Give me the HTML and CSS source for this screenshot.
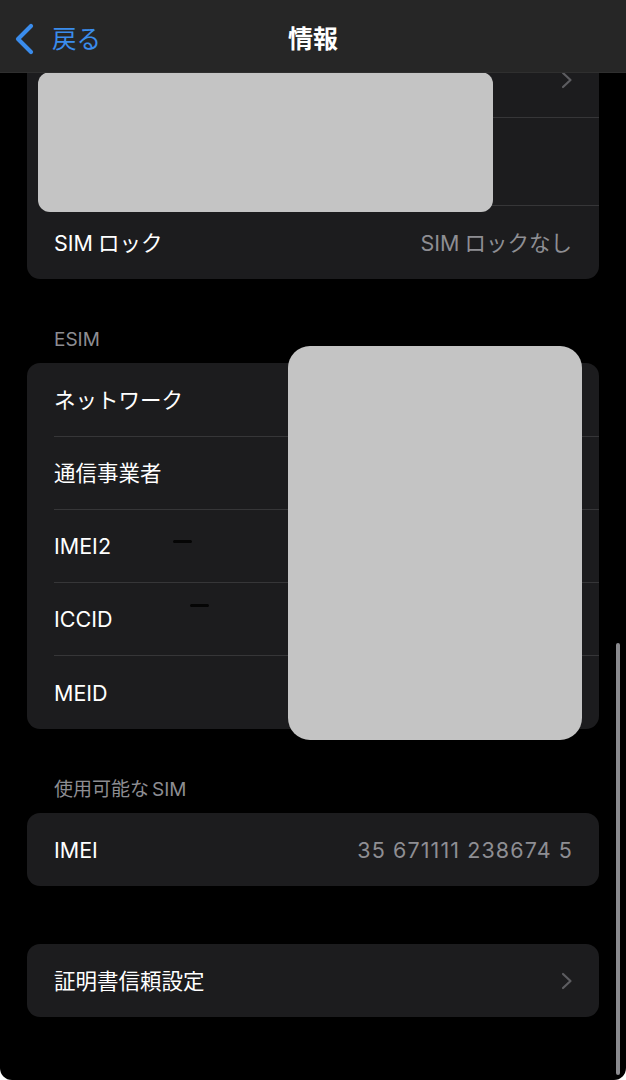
FILE: index.html
```html
<!DOCTYPE html>
<html lang="ja">
<head>
<meta charset="utf-8">
<title>情報</title>
<link rel="stylesheet" href="styles.css">
</head>
<body>
<div class="screen">
  <header class="nav">
    <div class="back">
      <svg class="back-chev" width="22" height="32" viewBox="0 0 22 32"><path d="M18 3 L5 16 L18 29" fill="none" stroke="#3a8cec" stroke-width="4.2" stroke-linecap="round" stroke-linejoin="round"/></svg>
      <span class="back-text">戻る</span>
    </div>
    <div class="nav-title">情報</div>
  </header>

  <main class="content">
    <section class="card">
      <div class="row row-first">
        <span class="label"></span>
        <svg class="chev" width="12" height="18" viewBox="0 0 12 18"><path d="M2 2 L9.5 9 L2 16" fill="none" stroke="#5c5c60" stroke-width="2.2" stroke-linecap="round" stroke-linejoin="round"/></svg>
      </div>
      <div class="row row-tall"><span class="label"></span></div>
      <div class="row">
        <span class="label">SIM<span class="jp-gap">ロック</span></span>
        <span class="value">SIM<span class="jp-gap">ロックなし</span></span>
      </div>
    </section>

    <div class="section-header">ESIM</div>
    <section class="card">
      <div class="row"><span class="label">ネットワーク</span></div>
      <div class="row"><span class="label">通信事業者</span></div>
      <div class="row"><span class="label">IMEI2</span></div>
      <div class="row"><span class="label">ICCID</span></div>
      <div class="row"><span class="label">MEID</span></div>
    </section>

    <div class="section-header">使用可能な<span class="jp-gap-sm">SIM</span></div>
    <section class="card">
      <div class="row">
        <span class="label">IMEI</span>
        <span class="value num">35 671111 238674 5</span>
      </div>
    </section>

    <section class="card card-gap">
      <div class="row">
        <span class="label">証明書信頼設定</span>
        <svg class="chev" width="12" height="18" viewBox="0 0 12 18"><path d="M2 2 L9.5 9 L2 16" fill="none" stroke="#5c5c60" stroke-width="2.2" stroke-linecap="round" stroke-linejoin="round"/></svg>
      </div>
    </section>
  </main>

  <div class="redact redact-1"></div>
  <div class="redact redact-2"></div>
  <div class="dash dash-1"></div>
  <div class="dash dash-2"></div>
  <div class="scrollbar"></div>
</div>
</body>
</html>
```

FILE: styles.css
```css
* { box-sizing: border-box; }

html, body {
  margin: 0;
  padding: 0;
  background: #ffffff;
}

body {
  font-family: Inter, "Noto Sans CJK JP", "Noto Sans", sans-serif;
  color: #ffffff;
}

.screen {
  position: relative;
  width: 626px;
  height: 1080px;
  background: #000000;
  overflow: hidden;
  border-radius: 0 0 12px 12px;
}

.nav {
  position: absolute;
  top: 0;
  left: 0;
  right: 0;
  height: 73px;
  background: #262626;
  border-bottom: 1px solid #2f2f2f;
  z-index: 5;
  display: flex;
  align-items: center;
  justify-content: center;
}

.back {
  position: absolute;
  left: 13px;
  top: 23px;
  display: flex;
  align-items: center;
  gap: 17px;
}

.back-text {
  font-family: "Noto Sans CJK JP", sans-serif;
  font-size: 24.5px;
  line-height: 32px;
  color: #3a8cec;
  margin-top: -2px;
}

.nav-title {
  font-family: "Noto Sans CJK JP", sans-serif;
  font-size: 25px;
  font-weight: 700;
  line-height: 32px;
  color: #ffffff;
  margin-top: 1px;
}

.content {
  padding-top: 43px;
}

.card {
  margin: 0 27px;
  background: #1c1c1e;
  border-radius: 13px;
  overflow: hidden;
}

.card-gap {
  margin-top: 58px;
}

.row {
  margin-left: 27px;
  padding-right: 27px;
  height: 73px;
  display: flex;
  align-items: center;
  justify-content: space-between;
  border-top: 1px solid #363638;
}

.row:first-child {
  border-top: none;
}

.row-first { height: 74px; align-items: flex-start; padding-top: 28px; }
.row-tall { height: 88px; }

.card .row:last-child:not(:first-child) { height: 74px; }

.label {
  font-size: 21.5px;
  line-height: 28px;
  color: #ffffff;
  font-family: Inter, "Noto Sans CJK JP", sans-serif;
}

.value {
  font-size: 21.5px;
  line-height: 28px;
  color: #8e8e93;
  font-family: Inter, "Noto Sans CJK JP", sans-serif;
}

.num {
  letter-spacing: 1.1px;
  margin-right: -1px;
}

.jp-gap { margin-left: 5px; }
.jp-gap-sm { margin-left: 3px; }

.chev {
  display: block;
  margin-right: -1px;
}

.section-header {
  padding: 49px 27px 11px 54px;
  font-size: 19px;
  line-height: 24px;
  color: #8d8d92;
  font-family: Inter, "Noto Sans CJK JP", sans-serif;
}

.redact {
  position: absolute;
  background: #c4c4c4;
  z-index: 3;
}

.redact-1 {
  left: 38px;
  top: 72px;
  width: 455px;
  height: 140px;
  border-radius: 12px;
}

.redact-2 {
  left: 288px;
  top: 346px;
  width: 294px;
  height: 394px;
  border-radius: 22px;
}

.dash {
  position: absolute;
  height: 3px;
  width: 19px;
  background: #050505;
  border-radius: 2px;
  z-index: 2;
}

.dash-1 { left: 173px; top: 540px; }
.dash-2 { left: 190px; top: 604px; }

.scrollbar {
  position: absolute;
  left: 616px;
  top: 643px;
  width: 4px;
  height: 432px;
  border-radius: 2px;
  background: #8a8a8e;
  z-index: 4;
}
```
